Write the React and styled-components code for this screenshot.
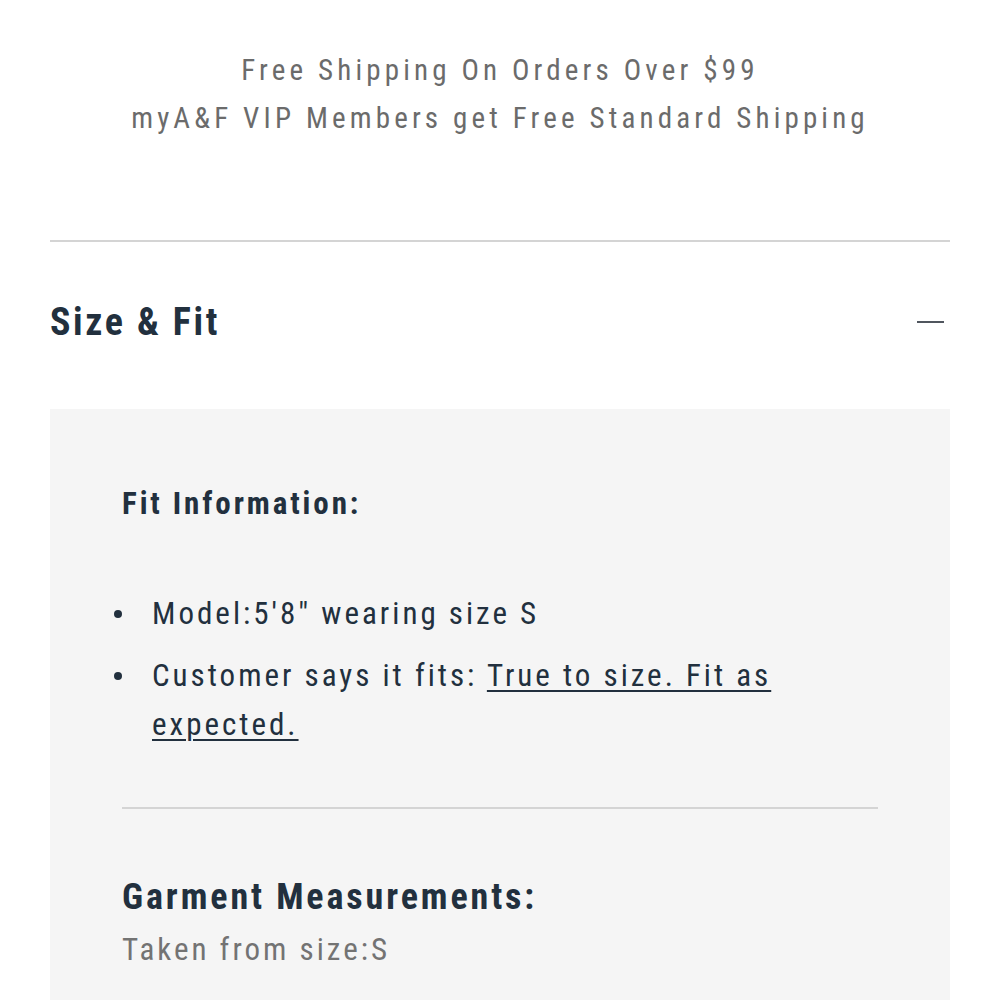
import React from "react";
import styled, { createGlobalStyle } from "styled-components";

const Global = createGlobalStyle`
  html, body { margin: 0; padding: 0; background: #ffffff; }
  body { font-family: "Roboto Condensed", "Liberation Sans", sans-serif; }
`;

const Page = styled.main`
  padding: 0 50px;
`;

const Promo = styled.section`
  padding-top: 46px;
  text-align: center;
  color: #6b6b6b;
  font-size: 29px;
  line-height: 48px;
  letter-spacing: 4.15px;
`;

const PromoLine = styled.p`
  margin: 0;
`;

const Divider = styled.hr`
  border: 0;
  height: 2px;
  background: #d4d4d4;
  margin: ${p => p.$top}px 0 0;
`;

const AccordionHeader = styled.div`
  height: 167px;
  padding-bottom: 7px;
  box-sizing: border-box;
  display: flex;
  align-items: center;
  justify-content: space-between;
`;

const AccordionTitle = styled.h2`
  margin: 0;
  font-size: 38px;
  line-height: 38px;
  font-weight: 700;
  letter-spacing: 2.6px;
  color: #22303e;
`;

const MinusIcon = styled.span`
  display: block;
  width: 27px;
  height: 2px;
  margin-right: 6px;
  background: #50565e;
`;

const Panel = styled.section`
  background: #f5f5f5;
  padding: 75px 72px 60px;
  color: #22303e;
`;

const SectionTitle = styled.h3`
  margin: ${p => p.$top || 0}px 0 0;
  font-size: ${p => p.$size}px;
  line-height: ${p => p.$lh}px;
  font-weight: 700;
  letter-spacing: 2.9px;
`;

const FitList = styled.ul`
  margin: 65px 0 0 -8px;
  padding: 0;
  list-style: none;
`;

const FitItem = styled.li`
  display: grid;
  grid-template-columns: 38px 1fr;
  font-size: 31px;
  line-height: 49px;
  letter-spacing: 3px;
  & + & { margin-top: 13px; }
`;

const Bullet = styled.span`
  width: 8px;
  height: 8px;
  margin-top: 21px;
  border-radius: 50%;
  background: #22303e;
`;

const FitLink = styled.a`
  color: inherit;
  text-decoration: underline;
  text-underline-offset: 4px;
  text-decoration-thickness: 2px;
`;

const InnerDivider = styled.hr`
  border: 0;
  height: 2px;
  background: #d4d4d4;
  margin: 58px 0 0;
`;

const Note = styled.p`
  margin: 6px 0 0;
  font-size: 31px;
  line-height: 49px;
  letter-spacing: 3px;
  color: #737373;
`;

export default function App() {
  return (
    <Page>
      <Global />
      <Promo>
        <PromoLine>Free Shipping On Orders Over $99</PromoLine>
        <PromoLine>myA&amp;F VIP Members get Free Standard Shipping</PromoLine>
      </Promo>
      <Divider $top={98} />
      <AccordionHeader>
        <AccordionTitle>Size &amp; Fit</AccordionTitle>
        <MinusIcon />
      </AccordionHeader>
      <Panel>
        <SectionTitle $size={31} $lh={40}>Fit Information:</SectionTitle>
        <FitList>
          <FitItem>
            <Bullet />
            <span>Model:5'8" wearing size S</span>
          </FitItem>
          <FitItem>
            <Bullet />
            <span>
              Customer says it fits: <FitLink href="#">True to size. Fit as expected.</FitLink>
            </span>
          </FitItem>
        </FitList>
        <InnerDivider />
        <SectionTitle $size={36} $lh={44} $top={66}>Garment Measurements:</SectionTitle>
        <Note>Taken from size:S</Note>
      </Panel>
    </Page>
  );
}
